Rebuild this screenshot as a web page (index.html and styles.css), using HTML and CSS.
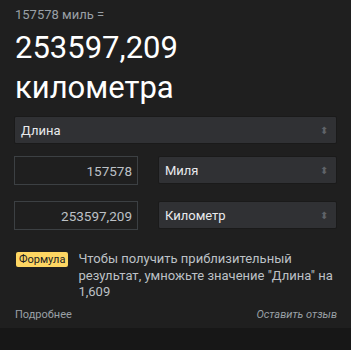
FILE: index.html
```html
<!DOCTYPE html>
<html lang="ru">
<head>
<meta charset="utf-8">
<link rel="stylesheet" href="styles.css">
</head>
<body>
<div class="card">
  <div class="caption">157578 миль =</div>
  <div class="result">253597,209<br>километра</div>
  <div class="select wide"><span>Длина</span><span class="arrows">⬍</span></div>
  <div class="row">
    <div class="input">157578</div>
    <div class="select"><span>Миля</span><span class="arrows">⬍</span></div>
  </div>
  <div class="row">
    <div class="input">253597,209</div>
    <div class="select"><span>Километр</span><span class="arrows">⬍</span></div>
  </div>
  <div class="formula">
    <span class="badge">Формула</span>
    <p>Чтобы получить приблизительный результат, умножьте значение "Длина" на 1,609</p>
  </div>
  <div class="footer">
    <span>Подробнее</span>
    <span class="feedback">Оставить отзыв</span>
  </div>
</div>
<div class="band"></div>
</body>
</html>
```
FILE: styles.css
```css
html, body {
  margin: 0;
  padding: 0;
  background: #1f1f1f;
  font-family: Roboto, "Noto Sans", sans-serif;
}
.card {
  padding: 7px 14px 0 14px;
  height: 328px;
  box-sizing: border-box;
}
.caption {
  color: #9aa0a6;
  font-size: 13px;
  line-height: 16px;
  padding-left: 1px;
}
.result {
  color: #ffffff;
  font-size: 31px;
  line-height: 40px;
  padding-left: 1px;
  margin-top: 5px;
  margin-bottom: 8px;
}
.select {
  background: #303134;
  border: 1px solid #1a1a1a;
  height: 28px;
  box-sizing: border-box;
  display: flex;
  align-items: center;
  justify-content: space-between;
  padding: 0 8px 0 6px;
  color: #e8eaed;
  font-size: 13px;
  flex: 1;
  border-radius: 2px;
}
.arrows {
  color: #5f6368;
  font-size: 10px;
}
.row {
  display: flex;
  gap: 20px;
  margin-top: 12px;
}
.row + .row {
  margin-top: 16px;
}
.input {
  width: 124px;
  height: 29px;
  box-sizing: border-box;
  border: 1px solid #3c4043;
  color: #bdc1c6;
  font-size: 13.5px;
  display: flex;
  align-items: center;
  justify-content: flex-end;
  padding-right: 5px;
}
.formula {
  display: flex;
  gap: 10px;
  margin-top: 21px;
  padding-left: 2px;
}
.badge {
  background: #fdd663;
  color: #202124;
  font-size: 11px;
  height: 15px;
  line-height: 15px;
  padding: 0 3px;
  border-radius: 2px;
  flex: none;
  margin-top: 1px;
}
.formula p {
  margin: 0;
  color: #bdc1c6;
  font-size: 13px;
  line-height: 16.5px;
}
.footer {
  display: flex;
  justify-content: space-between;
  margin-top: 7px;
  font-size: 11px;
  color: #9aa0a6;
  padding-left: 1px;
}
.feedback {
  font-style: italic;
}
.band {
  height: 22px;
  background: #171717;
}
```
